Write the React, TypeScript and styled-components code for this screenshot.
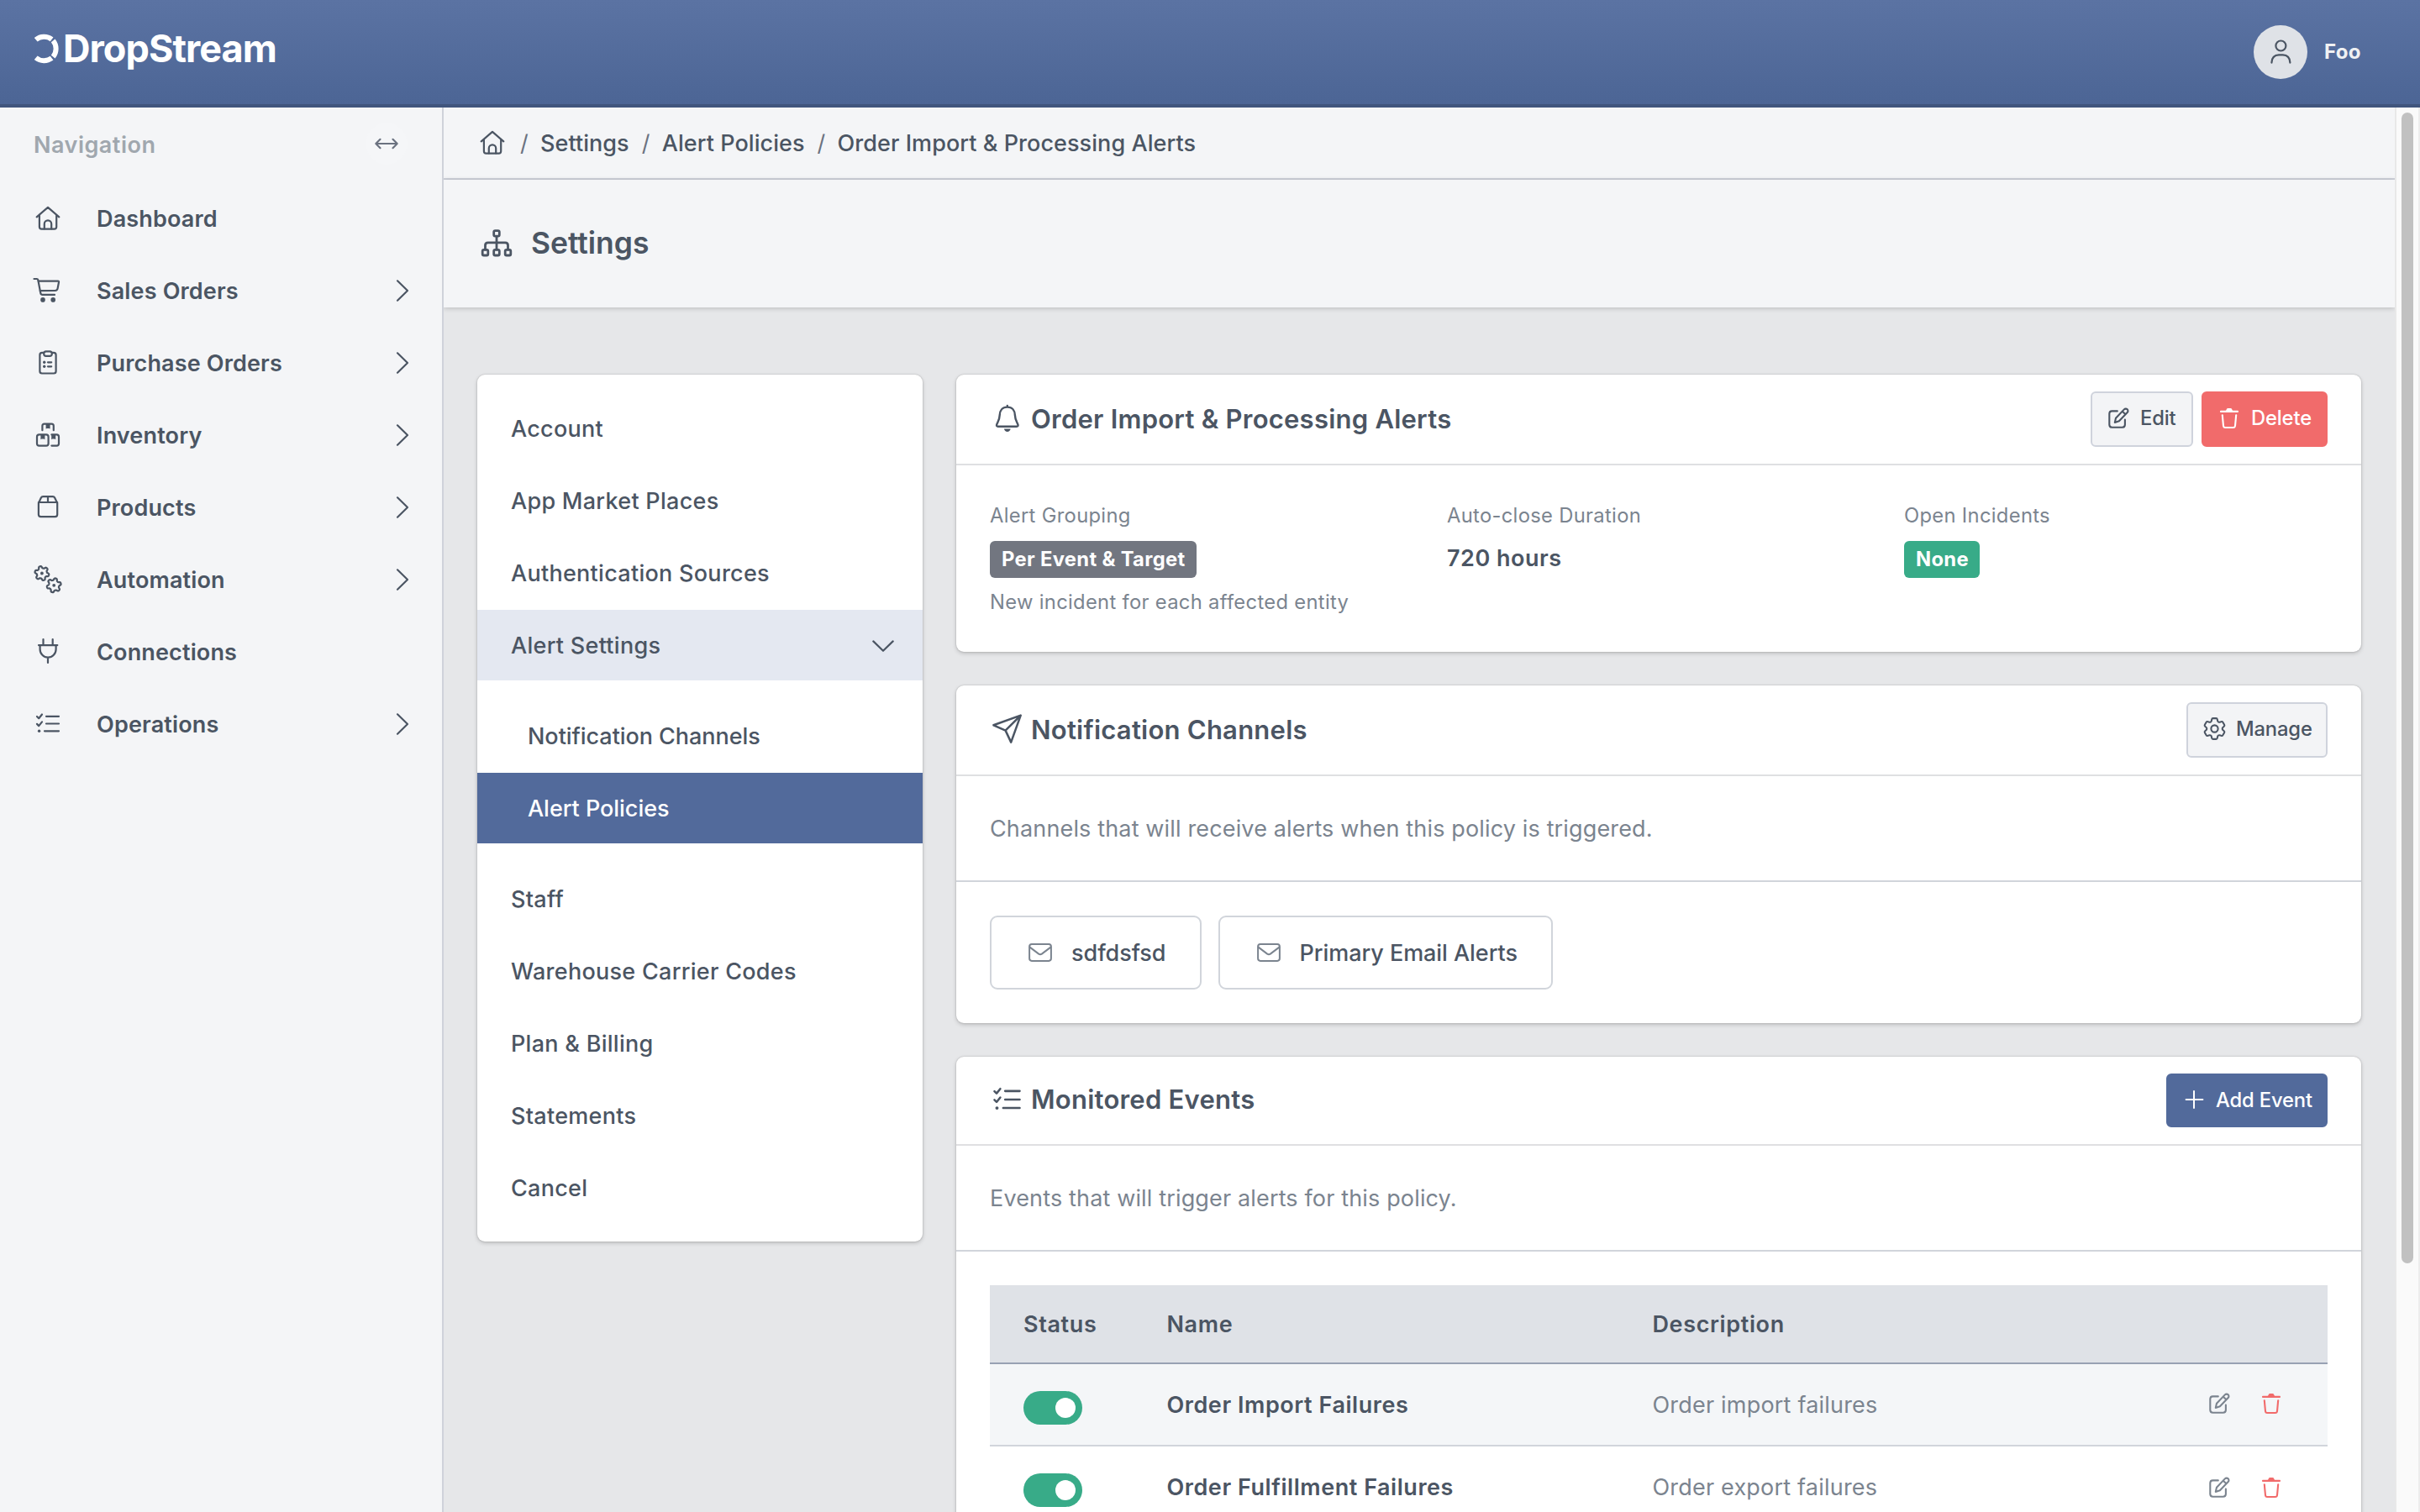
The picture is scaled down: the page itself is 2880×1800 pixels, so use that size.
import React from "react";
import styled, { createGlobalStyle, css } from "styled-components";
import { HiOutlineCog6Tooth } from "react-icons/hi2";

const color = {
  text: "#4b5563",
  muted: "#7b848f",
  faint: "#a0a7ae",
  panel: "#f4f5f7",
  canvas: "#e6e7e9",
  line: "#d1d5db",
  primary: "#526a9b",
  danger: "#f16b6b",
  success: "#38ab88",
};

const GlobalStyle = createGlobalStyle`
  *, *::before, *::after { box-sizing: border-box; }
  html, body, #root { height: 100%; }
  body {
    margin: 0;
    overflow: hidden;
    font-family: Inter, "Liberation Sans", sans-serif;
    font-size: 27px;
    line-height: 1.5;
    color: ${color.text};
    background: ${color.canvas};
  }
`;

/* ---------- icons ---------- */

const Svg = styled.svg<{ $w: number; $h?: number; $stroke?: number; $cap?: "round" | "butt" }>`
  display: block;
  flex: none;
  width: ${(p) => p.$w}px;
  height: ${(p) => p.$h ?? p.$w}px;
  overflow: visible;
  fill: none;
  stroke: currentColor;
  stroke-width: ${(p) => p.$stroke ?? 2.2};
  stroke-linecap: ${(p) => p.$cap ?? "round"};
  stroke-linejoin: round;

  .solid {
    fill: currentColor;
    stroke: none;
  }
`;

const HomeIcon = () => (
  <Svg $w={32} viewBox="0 0 32 32">
    <path d="M2.7 14.3 16 2.8 29.3 14.3M5.9 12V26Q5.9 28.6 8.5 28.6H23.6Q26.2 28.6 26.2 26V12" />
    <path d="M11.8 28.4V22.5a4.2 4.2 0 0 1 8.4 0V28.4" />
  </Svg>
);

const CartIcon = () => (
  <Svg $w={32} viewBox="0 0 32 32">
    <path d="M-.5 2H2.8Q4 2 4.3 3.2L7.3 19Q7.7 20.9 9.5 20.9H24" />
    <path d="M4.8 4.7H28Q29.2 4.7 29 6L27.6 13.4Q27.1 15.8 24.8 15.9L6.8 16.2" />
    <circle className="solid" cx="10" cy="26.9" r="2.8" />
    <circle className="solid" cx="22.2" cy="26.9" r="2.8" />
  </Svg>
);

const ClipboardIcon = () => (
  <Svg $w={32} viewBox="0 0 32 32">
    <path d="M11 3.9H9Q6.4 3.9 6.4 6.5V26Q6.4 28.5 9 28.5H23Q25.6 28.5 25.6 26V6.5Q25.6 3.9 23 3.9H21" />
    <rect x="11.2" y="2.4" width="9.6" height="5.4" rx="2.6" />
    <path d="M16 15.3h4.2M16 20.3h4.2" />
    <circle className="solid" cx="11.7" cy="15.3" r="1.7" />
    <circle className="solid" cx="11.7" cy="20.3" r="1.7" />
  </Svg>
);

const BoxesIcon = () => (
  <Svg $w={32} viewBox="0 0 32 32">
    <path d="M9.4 10.2V5Q9.4 2.6 11.8 2.6H20.4Q22.8 2.6 22.8 5V10.2" />
    <rect x="3" y="15.4" width="13.6" height="13.2" rx="2.6" />
    <path d="M20.4 15.4H26.4Q29 15.4 29 18V26Q29 28.6 26.4 28.6H20.4" />
    <path className="solid" d="M13.6 2.6h5v6l-1.2-.7h-2.6l-1.2.7zM7.4 15.4h5v5.8l-1.2-.7H8.6l-1.2.7zM20.2 15.4h5v5.8l-1.2-.7h-2.6l-1.2.7z" />
  </Svg>
);

const BoxIcon = () => (
  <Svg $w={32} viewBox="0 0 32 32">
    <path d="M4.9 11 7.9 4.5Q8.6 3.1 10.2 3.1H21.8Q23.4 3.1 24.1 4.5L27.2 11V24.6Q27.2 27.1 24.7 27.1H7.4Q4.9 27.1 4.9 24.6Z" />
    <path d="M4.9 10H27.2M16 3.1V10" />
  </Svg>
);

function cogOutline(cx: number, cy: number, turn: number) {
  const pts: string[] = [];
  for (let i = 0; i < 96; i++) {
    const a = (i / 96) * Math.PI * 2;
    const wave = Math.tanh(2 * Math.cos(6 * (a - turn)));
    const r = 7.3 + 1.25 * wave;
    pts.push(`${(cx + r * Math.cos(a)).toFixed(2)} ${(cy + r * Math.sin(a)).toFixed(2)}`);
  }
  return `M${pts.join("L")}Z`;
}

const CogsIcon = () => (
  <Svg $w={32} viewBox="0 0 32 32">
    <path d={cogOutline(8.9, 8.5, 0.25)} />
    <path d={cogOutline(23.2, 22.8, 0.78)} />
    <circle className="solid" cx="8.9" cy="8.5" r="1.9" />
    <circle className="solid" cx="23.2" cy="22.8" r="1.9" />
  </Svg>
);

const PlugIcon = () => (
  <Svg $w={32} viewBox="0 0 32 32">
    <path d="M10.5 1V7.5M21.7 1V7.5M5 8.1H27.3M6.6 8.4V12.9a9.5 9.8 0 0 0 19 0V8.4M16 22.9V28.9" />
  </Svg>
);

const ChecklistIcon = ({ size = 32 }: { size?: number }) => (
  <Svg $w={size} viewBox="0 0 32 32">
    <path d="M14 6.8H29M14 15.5H29M12 24.3H29M3 7 5.2 9.2 9 4.5M3 15.9 5.2 18.1 9 13.4" />
    <circle className="solid" cx="5.6" cy="24.3" r="1.7" />
  </Svg>
);

const SitemapIcon = () => (
  <Svg $w={38} $stroke={2.8} viewBox="0 0 38 38">
    <rect x="15.7" y="3.6" width="6.6" height="6.6" rx="1.6" />
    <rect x="2.2" y="26.4" width="6.6" height="6.6" rx="1.6" />
    <rect x="15.7" y="26.4" width="6.6" height="6.6" rx="1.6" />
    <rect x="29.2" y="26.4" width="6.6" height="6.6" rx="1.6" />
    <path d="M19 10.6V26M5.5 26V21.1Q5.5 17.9 8.7 17.9H29.3Q32.5 17.9 32.5 21.1V26" />
  </Svg>
);

const BellIcon = () => (
  <Svg $w={40} $stroke={2.4} viewBox="0 0 40 40">
    <path d="M20.8 5.6C14.6 5.6 11.9 10 11.7 15.2C11.5 20.6 9.6 22.8 8.2 26.4Q7.5 28.8 9.7 28.8H31.9Q34.1 28.8 33.4 26.4C32 22.8 30.1 20.6 29.9 15.2C29.7 10 27 5.6 20.8 5.6ZM20.8 4V5.4" />
    <path className="solid" d="M16.9 31.6H24.7Q23.8 35 20.8 35Q17.8 35 16.9 31.6Z" />
  </Svg>
);

const PlaneIcon = () => (
  <Svg $w={40} $stroke={2.5} viewBox="0 0 40 40">
    <path d="M36.7 2.6 4.4 14.3 18.6 20.6 25.2 34.6ZM18.6 20.6 36.7 2.6" />
  </Svg>
);

const EditIcon = () => (
  <Svg $w={26} $stroke={2.1} viewBox="0 0 26 26">
    <path d="M11.8 4.4H5.5Q2.3 4.4 2.3 7.6V20.6Q2.3 23.8 5.5 23.8H17.7Q20.9 23.8 20.9 20.6V14.6" />
    <path d="M8.8 18 10 12.8 19.9 2.4a2.6 2.6 0 0 1 3.8 3.7L13.9 16.2ZM17.8 4.7 21.5 8.3" />
  </Svg>
);

const TrashIcon = () => (
  <Svg $w={26} $stroke={2.1} viewBox="0 0 26 26">
    <path d="M3 4.9H23M4.8 9.2 6 22Q6.2 24 8.2 24H17.8Q19.8 24 20 22L21.2 9.2" />
    <path className="solid" d="M7.8 4.6Q9.4 3.9 9.8 2.2Q10.2 1 11.6 1H14.4Q15.8 1 16.2 2.2Q16.6 3.9 18.2 4.6Z" />
  </Svg>
);

const PlusIcon = () => (
  <Svg $w={26} $stroke={2} viewBox="0 0 26 26">
    <path d="M3.6 13H23.4M13 3.1V22.9" />
  </Svg>
);

const GearIcon = styled(HiOutlineCog6Tooth)`
  flex: none;
  width: 33px;
  height: 33px;
  margin: -3.5px;
`;

const MailIcon = () => (
  <Svg $w={28} $h={22} $stroke={2} viewBox="0 0 28 22">
    <rect x="1.1" y="1.1" width="25.8" height="19.8" rx="2.8" />
    <path d="M1.6 4.6 12.2 12.6Q14 13.8 15.8 12.6L26.4 4.6" />
  </Svg>
);

const UserIcon = () => (
  <Svg $w={28} $h={32} viewBox="0 0 28 32">
    <circle cx="14.4" cy="8.5" r="6" />
    <path d="M3.4 28.6Q3.8 19.6 12 19.4H16.8Q25 19.6 25.4 28.6" />
  </Svg>
);

const ResizeIcon = () => (
  <Svg $w={28} $h={14} viewBox="0 0 28 14">
    <path d="M1.3 7H26.7M6.5 1.8 1.3 7 6.5 12.2M21.5 1.8 26.7 7 21.5 12.2" />
  </Svg>
);

const ChevronRight = () => (
  <Svg $w={14} $h={26} viewBox="0 0 14 26">
    <path d="M1 1.3 13 13 1 24.7" />
  </Svg>
);

const ChevronDown = () => (
  <Svg $w={26} $h={14} viewBox="0 0 26 14">
    <path d="M1.3 1.4 13 12.8 24.7 1.4" />
  </Svg>
);

const BrandMark = () => (
  <Svg $w={32} $h={38} $stroke={6} $cap="butt" viewBox="0 0 32 38">
    <path d="M2.7 8.2A15.2 15.2 0 0 1 21.6 7.8M23.2 9.4A15.2 15.2 0 0 1 23.2 28.6M21.6 30.2A15.2 15.2 0 0 1 2.7 29.8" />
  </Svg>
);

/* ---------- app frame ---------- */

const Frame = styled.div`
  height: 100vh;
  display: flex;
  flex-direction: column;
`;

const TopBar = styled.header`
  flex: none;
  height: 128px;
  padding: 0 70px 0 40px;
  display: flex;
  align-items: center;
  justify-content: space-between;
  background: linear-gradient(#5b73a3, #4c6595);
  border-bottom: 4px solid #40557d;
  color: #fff;
`;

const Brand = styled.div`
  display: flex;
  align-items: center;
  gap: 3px;
  padding-bottom: 9px;
  font-size: 45px;
  font-weight: 700;
  letter-spacing: -0.95px;
  line-height: 1;
`;

const UserMenu = styled.div`
  display: flex;
  align-items: center;
  gap: 20px;
  font-size: 24px;
  font-weight: 680;
  letter-spacing: 0.4px;
  color: #f0f1f3;
`;

const Avatar = styled.div`
  width: 64px;
  height: 64px;
  border-radius: 50%;
  display: grid;
  place-items: center;
  background: #dfe2e7;
  color: ${color.text};
`;

const Body = styled.div`
  flex: 1;
  min-height: 0;
  display: grid;
  grid-template-columns: 528px 1fr 30px;
`;

/* ---------- sidebar ---------- */

const Sidebar = styled.nav`
  background: ${color.panel};
  border-right: 2px solid #cfd2da;
`;

const SidebarHead = styled.div`
  height: 89px;
  padding: 0 41px 3px 40px;
  display: flex;
  align-items: center;
  justify-content: space-between;
  font-weight: 600;
  letter-spacing: 0.5px;
  color: ${color.faint};

  > :first-child {
    padding-top: 4px;
  }
`;

const RoundToggle = styled.span`
  width: 50px;
  height: 50px;
  border-radius: 50%;
  display: grid;
  place-items: center;
  background: #f5f6f8;
  color: #6b7280;
`;

const NavItem = styled.a`
  height: 86px;
  padding: 0 40px 0 41px;
  display: grid;
  grid-template-columns: 32px 1fr auto;
  column-gap: 42px;
  align-items: center;
  font-weight: 560;
  letter-spacing: 0.15px;
`;

const Label = styled.span`
  padding-top: 2px;
`;

/* ---------- main column ---------- */

const Main = styled.main`
  min-width: 0;
  min-height: 0;
  display: flex;
  flex-direction: column;
  overflow: hidden;
`;

const Crumbs = styled.div`
  flex: none;
  height: 86px;
  padding-left: 42px;
  display: flex;
  align-items: center;
  gap: 15px;
  background: ${color.panel};
  border-bottom: 2px solid #cfd2da;
  font-weight: 480;
  letter-spacing: 0.06px;
  white-space: nowrap;
`;

const Crumb = styled.span`
  padding-top: 2px;
`;

const Slash = styled.span`
  width: 9px;
  padding-top: 2px;
  text-align: center;
  font-weight: 400;
  color: #6b7280;

  svg + & {
    margin-left: 2px;
  }
`;

const PageHead = styled.div`
  flex: none;
  position: relative;
  height: 152px;
  padding: 0 0 1px 44px;
  display: flex;
  align-items: center;
  gap: 22px;
  background: ${color.panel};
  box-shadow: 0 1px 6px rgba(0, 0, 0, 0.2);
`;

const PageTitle = styled.h1`
  margin: 0;
  font-size: 35.5px;
  font-weight: 620;
  letter-spacing: -0.05px;
`;

const Content = styled.div`
  flex: 1;
  min-height: 0;
  padding: 80px 40px 0;
  display: grid;
  grid-template-columns: 530px 1672px;
  column-gap: 40px;
  align-items: start;
`;

const cardSurface = css`
  background: #fff;
  border-radius: 9px;
  box-shadow: 0 0 2px rgba(0, 0, 0, 0.22), 0 2px 5px rgba(0, 0, 0, 0.18);
`;

const Menu = styled.aside`
  ${cardSurface}
  padding: 22px 0;
  display: flex;
  flex-direction: column;
  gap: 2px;
`;

const MenuItem = styled.a<{ $open?: boolean }>`
  height: 84px;
  padding: 2px 34px 0 40px;
  display: flex;
  align-items: center;
  justify-content: space-between;
  font-weight: 540;
  letter-spacing: 0.28px;
  background: ${(p) => (p.$open ? "#e4e8f1" : "transparent")};
`;

const SubMenu = styled.div`
  margin: 22px 0;
  display: flex;
  flex-direction: column;
  gap: 2px;
`;

const SubItem = styled.a<{ $active?: boolean }>`
  height: 84px;
  padding: 2px 0 0 60px;
  display: flex;
  align-items: center;
  font-weight: ${(p) => (p.$active ? 500 : 450)};
  letter-spacing: ${(p) => (p.$active ? -0.03 : -0.05)}px;
  color: ${(p) => (p.$active ? "#fff" : color.text)};
  background: ${(p) => (p.$active ? color.primary : "transparent")};
`;

const Stack = styled.div`
  display: flex;
  flex-direction: column;
  gap: 40px;
`;

const Card = styled.section`
  ${cardSurface}
`;

const CardHead = styled.header`
  padding: 20px 40px;
  display: flex;
  align-items: center;
  justify-content: space-between;
  border-bottom: 2px solid #dfe0e2;
`;

const CardTitle = styled.h2<{ $raised?: boolean }>`
  margin: 0;
  padding-bottom: ${(p) => (p.$raised ? 2 : 0)}px;
  display: flex;
  align-items: center;
  gap: 9px;
  font-size: 31px;
  font-weight: 630;
  letter-spacing: 0.24px;
  line-height: 40px;
  white-space: nowrap;
`;

const TitleIcon = styled.span`
  width: 40px;
  height: 40px;
  display: grid;
  place-items: center;
`;

const Actions = styled.div`
  display: flex;
  gap: 10px;
`;

const tones = {
  plain: css`
    background: #f3f4f6;
    border-color: #cfd3dc;
    color: ${color.text};
  `,
  danger: css`
    background: ${color.danger};
    border-color: ${color.danger};
    color: #fff;
  `,
  primary: css`
    background: ${color.primary};
    border-color: ${color.primary};
    color: #fff;
  `,
};

const Button = styled.button<{ $tone: keyof typeof tones; $width: number; $compact?: boolean }>`
  width: ${(p) => p.$width}px;
  height: ${(p) => (p.$compact ? 64 : 66)}px;
  padding: 0 0 ${(p) => (p.$compact ? 2 : 3)}px 18px;
  display: flex;
  align-items: center;
  gap: 13px;
  border: 2px solid;
  border-radius: 6px;
  font: 500 23.75px Inter, "Liberation Sans", sans-serif;
  letter-spacing: -0.15px;
  white-space: nowrap;
  ${(p) => tones[p.$tone]}
`;

const Facts = styled.div`
  height: 222px;
  padding: 40px 40px 0;
  display: grid;
  grid-template-columns: repeat(3, 1fr);
  column-gap: 40px;
`;

const Fact = styled.div`
  display: flex;
  flex-direction: column;
  align-items: flex-start;
`;

const Caption = styled.div`
  height: 40px;
  line-height: 40px;
  font-size: 23.75px;
  letter-spacing: 0.32px;
  color: ${color.muted};
`;

const Badge = styled.span<{ $bg: string }>`
  height: 44px;
  margin: 10px 0 9px;
  padding: 0 13px 0 14px;
  border-radius: 6px;
  background: ${(p) => p.$bg};
  color: #fff;
  font-size: 23.75px;
  font-weight: 650;
  letter-spacing: 0.33px;
  line-height: 44px;
`;

const FactValue = styled.strong`
  height: 44px;
  margin-top: 9px;
  font-weight: 630;
  letter-spacing: 0.5px;
  line-height: 44px;
`;

const Note = styled.p`
  height: 126px;
  margin: 0;
  padding: 2px 40px 0;
  display: flex;
  align-items: center;
  letter-spacing: 0.15px;
  color: ${color.muted};
  border-bottom: 2px solid ${color.line};
`;

const Chips = styled.div`
  padding: 40px;
  display: flex;
  gap: 20px;
`;

const Chip = styled.div`
  height: 88px;
  padding: 0 40px 0 44px;
  display: flex;
  align-items: center;
  gap: 23px;
  border: 2px solid ${color.line};
  border-radius: 9px;
  font-weight: 450;
  letter-spacing: -0.05px;

  svg {
    color: ${color.muted};
  }
`;

/* ---------- events table ---------- */

const TableWrap = styled.div`
  padding: 40px;
`;

const row = css`
  padding-left: 40px;
  display: grid;
  grid-template-columns: 170.5px 578px 661.5px 1fr;
  align-items: center;
`;

const TableHead = styled.div`
  ${row}
  height: 94px;
  padding-top: 2px;
  background: #dfe2e7;
  border-bottom: 2px solid #98a1b3;
  font-weight: 630;
  letter-spacing: 0.62px;
`;

const TableRow = styled.div<{ $striped?: boolean }>`
  ${row}
  height: 98px;
  border-bottom: 2px solid ${color.line};
  background: ${(p) => (p.$striped ? "#f4f6f8" : "#fff")};
`;

const EventName = styled.span`
  padding-top: 2px;
  font-weight: 640;
  letter-spacing: 0.55px;
`;

const EventDescription = styled.span`
  padding-top: 2px;
  letter-spacing: 0.2px;
  color: ${color.muted};
`;

const Switch = styled.span`
  width: 70px;
  height: 40px;
  margin-top: 8px;
  padding-right: 8px;
  display: flex;
  align-items: center;
  justify-content: flex-end;
  border-radius: 20px;
  background: ${color.success};

  &::after {
    content: "";
    width: 24px;
    height: 24px;
    border-radius: 50%;
    background: #fff;
  }
`;

const RowActions = styled.div<{ $shift?: boolean }>`
  display: flex;
  gap: 36px;
  padding: ${(p) => (p.$shift ? "2px 0 0" : "0 0 2px")};
  color: ${color.muted};

  svg:last-child {
    color: ${color.danger};
  }
`;

/* ---------- scrollbar ---------- */

const ScrollTrack = styled.div`
  padding: 6px 6px 0;
  display: flex;
  background: #fafafa;
  border-left: 2px solid #e8e8e8;
  border-right: 2px solid #ededed;
`;

const ScrollThumb = styled.div`
  width: 16px;
  height: 1370px;
  border-radius: 8px;
  background: #c1c1c1;
`;

/* ---------- data ---------- */

const navigation = [
  { label: "Dashboard", Icon: HomeIcon, expandable: false },
  { label: "Sales Orders", Icon: CartIcon, expandable: true },
  { label: "Purchase Orders", Icon: ClipboardIcon, expandable: true },
  { label: "Inventory", Icon: BoxesIcon, expandable: true },
  { label: "Products", Icon: BoxIcon, expandable: true },
  { label: "Automation", Icon: CogsIcon, expandable: true },
  { label: "Connections", Icon: PlugIcon, expandable: false },
  { label: "Operations", Icon: ChecklistIcon, expandable: true },
];

const crumbs = ["Settings", "Alert Policies", "Order Import & Processing Alerts"];
const menuTop = ["Account", "App Market Places", "Authentication Sources"];
const menuBottom = ["Staff", "Warehouse Carrier Codes", "Plan & Billing", "Statements", "Cancel"];
const channels = ["sdfdsfsd", "Primary Email Alerts"];
const events = [
  { name: "Order Import Failures", description: "Order import failures" },
  { name: "Order Fulfillment Failures", description: "Order export failures" },
];

export default function App() {
  return (
    <Frame>
      <GlobalStyle />
      <TopBar>
        <Brand>
          <BrandMark />
          DropStream
        </Brand>
        <UserMenu>
          <Avatar>
            <UserIcon />
          </Avatar>
          Foo
        </UserMenu>
      </TopBar>

      <Body>
        <Sidebar>
          <SidebarHead>
            <span>Navigation</span>
            <RoundToggle>
              <ResizeIcon />
            </RoundToggle>
          </SidebarHead>
          {navigation.map(({ label, Icon, expandable }) => (
            <NavItem key={label}>
              <Icon />
              <Label>{label}</Label>
              {expandable && <ChevronRight />}
            </NavItem>
          ))}
        </Sidebar>

        <Main>
          <Crumbs>
            <HomeIcon />
            {crumbs.map((crumb) => (
              <React.Fragment key={crumb}>
                <Slash>/</Slash>
                <Crumb>{crumb}</Crumb>
              </React.Fragment>
            ))}
          </Crumbs>
          <PageHead>
            <SitemapIcon />
            <PageTitle>Settings</PageTitle>
          </PageHead>

          <Content>
            <Menu>
              {menuTop.map((item) => (
                <MenuItem key={item}>{item}</MenuItem>
              ))}
              <MenuItem $open>
                Alert Settings
                <ChevronDown />
              </MenuItem>
              <SubMenu>
                <SubItem>Notification Channels</SubItem>
                <SubItem $active>Alert Policies</SubItem>
              </SubMenu>
              {menuBottom.map((item) => (
                <MenuItem key={item}>{item}</MenuItem>
              ))}
            </Menu>

            <Stack>
              <Card>
                <CardHead>
                  <CardTitle>
                    <TitleIcon>
                      <BellIcon />
                    </TitleIcon>
                    Order Import &amp; Processing Alerts
                  </CardTitle>
                  <Actions>
                    <Button $tone="plain" $width={122}>
                      <EditIcon />
                      Edit
                    </Button>
                    <Button $tone="danger" $width={150}>
                      <TrashIcon />
                      Delete
                    </Button>
                  </Actions>
                </CardHead>
                <Facts>
                  <Fact>
                    <Caption>Alert Grouping</Caption>
                    <Badge $bg="#727680">Per Event &amp; Target</Badge>
                    <Caption>New incident for each affected entity</Caption>
                  </Fact>
                  <Fact>
                    <Caption>Auto-close Duration</Caption>
                    <FactValue>720 hours</FactValue>
                  </Fact>
                  <Fact>
                    <Caption>Open Incidents</Caption>
                    <Badge $bg={color.success}>None</Badge>
                  </Fact>
                </Facts>
              </Card>

              <Card>
                <CardHead>
                  <CardTitle>
                    <TitleIcon>
                      <PlaneIcon />
                    </TitleIcon>
                    Notification Channels
                  </CardTitle>
                  <Button $tone="plain" $width={168}>
                    <GearIcon />
                    Manage
                  </Button>
                </CardHead>
                <Note>Channels that will receive alerts when this policy is triggered.</Note>
                <Chips>
                  {channels.map((channel) => (
                    <Chip key={channel}>
                      <MailIcon />
                      <Label>{channel}</Label>
                    </Chip>
                  ))}
                </Chips>
              </Card>

              <Card>
                <CardHead>
                  <CardTitle $raised>
                    <TitleIcon>
                      <ChecklistIcon size={37} />
                    </TitleIcon>
                    Monitored Events
                  </CardTitle>
                  <Button $tone="primary" $width={192} $compact>
                    <PlusIcon />
                    Add Event
                  </Button>
                </CardHead>
                <Note>Events that will trigger alerts for this policy.</Note>
                <TableWrap>
                  <TableHead>
                    <span>Status</span>
                    <span>Name</span>
                    <span>Description</span>
                  </TableHead>
                  {events.map((event, index) => (
                    <TableRow key={event.name} $striped={index % 2 === 0}>
                      <Switch />
                      <EventName>{event.name}</EventName>
                      <EventDescription>{event.description}</EventDescription>
                      <RowActions $shift={index > 0}>
                        <EditIcon />
                        <TrashIcon />
                      </RowActions>
                    </TableRow>
                  ))}
                </TableWrap>
              </Card>
            </Stack>
          </Content>
        </Main>

        <ScrollTrack>
          <ScrollThumb />
        </ScrollTrack>
      </Body>
    </Frame>
  );
}
